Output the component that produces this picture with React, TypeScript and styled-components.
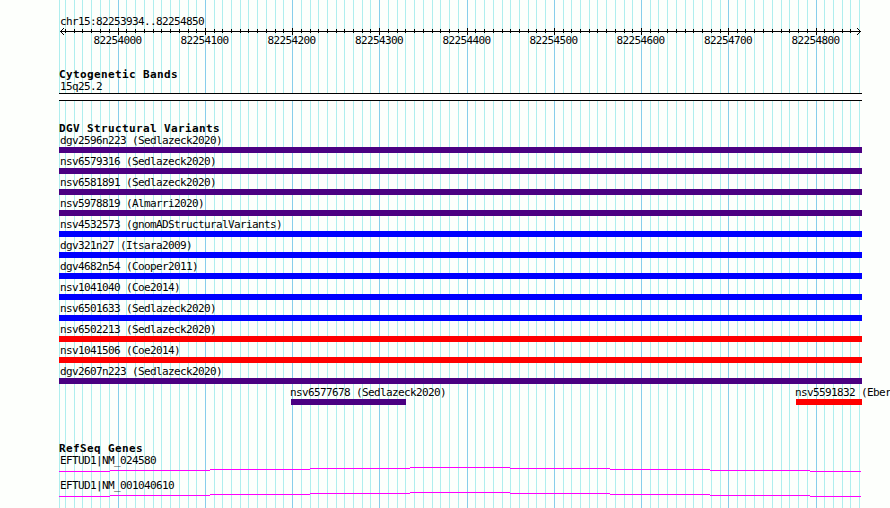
import styled, { createGlobalStyle } from "styled-components";

const GlobalStyle = createGlobalStyle`
    body {
        margin: 0;
        background-color: #fdfffc;
        overflow: hidden;
    }
`;

const Browser = styled.div`
    position: relative;
    width: 890px;
    height: 508px;
    overflow: hidden;
    color: #000;
    font-family: "DejaVu Sans Mono", "Liberation Mono", monospace;
    font-size: 11px;
    letter-spacing: -0.622px;
    line-height: 12px;
    white-space: pre;
`;

const GridLines = styled.svg`
    position: absolute;
    inset: 0;
`;

const Tracks = styled.main`
    position: relative;
    display: flex;
    flex-direction: column;
    width: 803px;
    padding: 15px 0 0 59px;
`;

const Ruler = styled.section`
    height: 53px;
`;

const Label = styled.div`
    box-sizing: border-box;
    height: 12px;
    padding: 1px 0 0 1px;
`;

const RulerAxis = styled.svg`
    display: block;
`;

const RulerNumbers = styled.div`
    display: flex;
    width: 786px;
    height: 12px;
    margin: 0 0 0 15px;
`;

const RulerNumber = styled.span<{ $width: number }>`
    flex: 0 0 ${props => props.$width}px;
    text-align: center;
`;

const TrackTitle = styled.h2`
    box-sizing: border-box;
    height: 12px;
    margin: 0;
    padding-top: 1px;
    font-size: 11px;
    font-weight: bold;
    line-height: 12px;
    letter-spacing: 0.378px;
`;

const BandTrack = styled.section`
    height: 54px;
`;

const Band = styled.div`
    box-sizing: border-box;
    height: 8px;
    margin-top: 1px;
    border-top: solid 1px #000;
    border-bottom: solid 1px #000;
    background-color: #fff;
`;

const VariantTrack = styled.section`
    height: 320px;
`;

const Variant = styled.div`
    height: 21px;
`;

const VariantBar = styled.div<{ $color: string }>`
    height: 6px;
    margin-top: 1px;
    background-color: ${props => props.$color};
`;

const VariantRow = styled.div`
    display: grid;
    grid-template-columns: 115px 66px;
    column-gap: 390px;
    padding-left: 232px;
    ${Label} {
        padding-left: 0;
        margin-left: -1px;
    }
`;

const GeneTrack = styled.section`
    height: 66px;
`;

const Gene = styled.div`
    height: 25px;
`;

const GeneLine = styled.svg`
    display: block;
`;

const INDIGO = "#4b0082";
const BLUE = "#0000ff";
const RED = "#ff0000";

const majorTicks = [118, 205, 292, 379, 467, 554, 641, 728, 816];
const minorTicks = [
    65, 74, 82, 91, 100, 109,
    126, 135, 144, 153, 161, 170, 179, 188, 196,
    214, 222, 231, 240, 248, 257, 266, 275, 283,
    301, 310, 318, 327, 336, 344, 353, 362, 370,
    388, 397, 405, 414, 423, 432, 440, 449, 458,
    475, 484, 493, 502, 510, 519, 528, 536, 545,
    563, 571, 580, 589, 597, 606, 615, 624, 632,
    650, 658, 667, 676, 685, 693, 702, 711, 720,
    737, 745, 754, 763, 772, 781, 789, 798, 807,
    824, 833, 842, 850,
];

const variants = [
    { name: "dgv2596n223 (Sedlazeck2020)", color: INDIGO },
    { name: "nsv6579316 (Sedlazeck2020)", color: INDIGO },
    { name: "nsv6581891 (Sedlazeck2020)", color: INDIGO },
    { name: "nsv5978819 (Almarri2020)", color: INDIGO },
    { name: "nsv4532573 (gnomADStructuralVariants)", color: BLUE },
    { name: "dgv321n27 (Itsara2009)", color: BLUE },
    { name: "dgv4682n54 (Cooper2011)", color: BLUE },
    { name: "nsv1041040 (Coe2014)", color: BLUE },
    { name: "nsv6501633 (Sedlazeck2020)", color: BLUE },
    { name: "nsv6502213 (Sedlazeck2020)", color: RED },
    { name: "nsv1041506 (Coe2014)", color: RED },
    { name: "dgv2607n223 (Sedlazeck2020)", color: INDIGO },
];

const shortVariants = [
    { name: "nsv6577678 (Sedlazeck2020)", color: INDIGO },
    { name: "nsv5591832 (Eber", color: RED },
];

const genes = ["EFTUD1|NM_024580", "EFTUD1|NM_001040610"];

// each intron step is 100px wide and one pixel higher or lower than the last
const geneSteps = [4, 3, 2, 1, 0, 1, 2, 3, 4];

const App = () => {
    return (
        <Browser>
            <GlobalStyle />
            <GridLines width="890" height="508" shapeRendering="crispEdges">
                {[59, ...minorTicks, 859].map((x) => (
                    <rect key={x} x={x} y="0" width="1" height="508" fill="#afeeee" />
                ))}
                {majorTicks.map((x) => (
                    <rect key={x} x={x} y="0" width="1" height="508" fill="#87ceeb" />
                ))}
            </GridLines>
            <Tracks>
                <Ruler>
                    <Label>chr15:82253934..82254850</Label>
                    <RulerAxis width="803" height="8" viewBox="59 27 803 8" shapeRendering="crispEdges">
                        <rect x="60" y="31" width="801" height="1" />
                        {minorTicks.map((x) => (
                            <rect key={x} x={x} y="29" width="1" height="4" />
                        ))}
                        {majorTicks.map((x) => (
                            <rect key={x} x={x} y="28" width="1" height="7" />
                        ))}
                        <path d="M61 30h1v1h-1zM62 29h1v1h-1zM63 28h1v1h-1zM61 32h1v1h-1zM62 33h1v1h-1zM63 34h1v1h-1z" />
                        <path d="M859 30h1v1h-1zM858 29h1v1h-1zM857 28h1v1h-1zM859 32h1v1h-1zM858 33h1v1h-1zM857 34h1v1h-1z" />
                    </RulerAxis>
                    <RulerNumbers>
                        {majorTicks.map((x, index) => (
                            <RulerNumber key={x} $width={index === 3 || index === 7 ? 88 : 87}>
                                {82254000 + index * 100}
                            </RulerNumber>
                        ))}
                    </RulerNumbers>
                </Ruler>
                <BandTrack>
                    <TrackTitle>Cytogenetic Bands</TrackTitle>
                    <Label>15q25.2</Label>
                    <Band />
                </BandTrack>
                <VariantTrack>
                    <TrackTitle>DGV Structural Variants</TrackTitle>
                    {variants.map((variant) => (
                        <Variant key={variant.name}>
                            <Label>{variant.name}</Label>
                            <VariantBar $color={variant.color} />
                        </Variant>
                    ))}
                    <VariantRow>
                        {shortVariants.map((variant) => (
                            <Variant key={variant.name}>
                                <Label>{variant.name}</Label>
                                <VariantBar $color={variant.color} />
                            </Variant>
                        ))}
                    </VariantRow>
                </VariantTrack>
                <GeneTrack>
                    <TrackTitle>RefSeq Genes</TrackTitle>
                    {genes.map((gene) => (
                        <Gene key={gene}>
                            <Label>{gene}</Label>
                            <GeneLine width="802" height="8" viewBox="59 0 802 8" shapeRendering="crispEdges">
                                {geneSteps.map((y, index) => (
                                    <rect
                                        key={index}
                                        x={index === 0 ? 59 : 10 + index * 100}
                                        y={y + 1}
                                        width={index === 0 ? 51 : 100}
                                        height="1"
                                        fill="#ff00ff"
                                    />
                                ))}
                            </GeneLine>
                        </Gene>
                    ))}
                </GeneTrack>
            </Tracks>
        </Browser>
    );
};

export default App;
